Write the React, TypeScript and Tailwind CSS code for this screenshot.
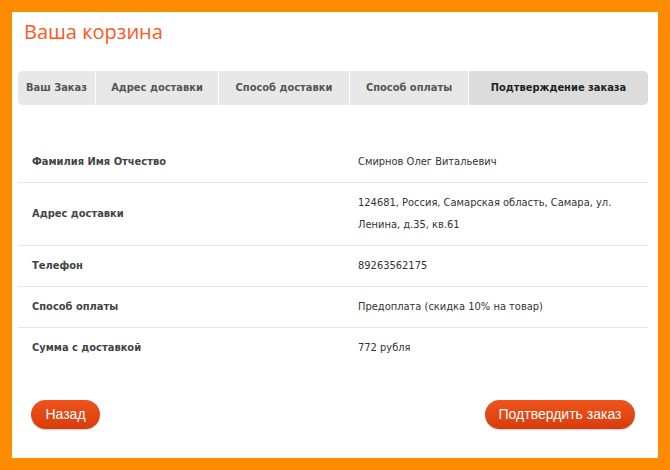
const tabs = [
  { label: "Ваш Заказ", w: "w-[77px]" },
  { label: "Адрес доставки", w: "w-[123px]" },
  { label: "Способ доставки", w: "w-[131px]" },
  { label: "Способ оплаты", w: "w-[119px]" },
  { label: "Подтверждение заказа", w: "flex-1", active: true },
];

const rows = [
  { label: "Фамилия Имя Отчество", value: "Смирнов Олег Витальевич" },
  { label: "Адрес доставки", value: "124681, Россия, Самарская область, Самара, ул. Ленина, д.35, кв.61" },
  { label: "Телефон", value: "89263562175" },
  { label: "Способ оплаты", value: "Предоплата (скидка 10% на товар)" },
  { label: "Сумма с доставкой", value: "772 рубля" },
];

export default function App() {
  return (
    <div className="w-[670px] h-[470px] bg-[#ff8c00] p-3">
      <div className="h-full bg-white px-[6px] pt-[6px] font-['DejaVu_Sans_Condensed','DejaVu_Sans',sans-serif]">
        <h1 className="pl-[6px] text-[20px] leading-[28px] text-[#ff5722] font-['Open_Sans',sans-serif]">
          Ваша корзина
        </h1>

        <div className="mt-[25px] mr-[4px] flex h-[34px] rounded-[5px] overflow-hidden bg-[#e8e8e8]">
          {tabs.map((t, i) => (
            <div
              key={t.label}
              className={`${t.w} flex items-center justify-center text-[11px] font-bold ${
                i > 0 ? "border-l border-white" : ""
              } ${t.active ? "bg-[#dcdcdc] text-[#222]" : "text-[#555]"}`}
            >
              {t.label}
            </div>
          ))}
        </div>

        <div className="mt-[37px] mr-[4px]">
          {rows.map((r, i) => (
            <div
              key={r.label}
              className={`flex items-center py-[9px] text-[11px] leading-[22px] ${
                i < rows.length - 1 ? "border-b border-[#e5e5e5]" : ""
              }`}
            >
              <div className="w-[340px] pl-[14px] font-bold text-[#444]">{r.label}</div>
              <div className="flex-1 pr-[20px] text-[#333]">{r.value}</div>
            </div>
          ))}
        </div>

        <div className="mt-[32px] mr-[17px] ml-[13px] flex justify-between font-['Liberation_Sans',sans-serif]">
          <button className="h-[29px] w-[69px] rounded-full bg-gradient-to-b from-[#f0531a] to-[#d83c0c] text-[14px] text-white shadow-[0_1px_1px_rgba(0,0,0,0.2)]">
            Назад
          </button>
          <button className="h-[29px] w-[150px] rounded-full bg-gradient-to-b from-[#f0531a] to-[#d83c0c] text-[14px] text-white shadow-[0_1px_1px_rgba(0,0,0,0.2)]">
            Подтвердить заказ
          </button>
        </div>
      </div>
    </div>
  );
}
